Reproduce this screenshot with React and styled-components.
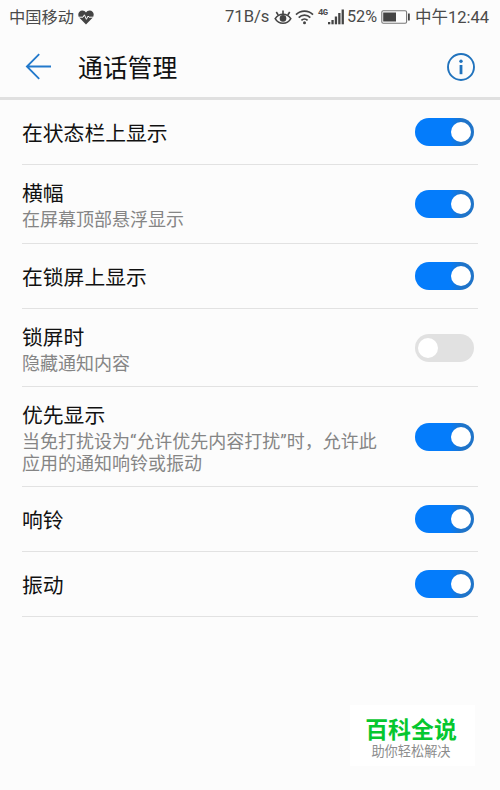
import React from 'react';
import styled, { createGlobalStyle } from 'styled-components';

const initialItems = [
    { id: "statusbar", title: "在状态栏上显示", on: true, height: 65 },
    { id: "banner", title: "横幅", desc: "在屏幕顶部悬浮显示", on: true, height: 79 },
    { id: "lockscreen", title: "在锁屏上显示", on: true, height: 65 },
    { id: "locked", title: "锁屏时", desc: "隐藏通知内容", on: false, height: 78 },
    { id: "priority", title: "优先显示", desc: "当免打扰设为“允许优先内容打扰”时，允许此应用的通知响铃或振动", on: true, height: 100 },
    { id: "ring", title: "响铃", on: true, height: 65 },
    { id: "vibrate", title: "振动", on: true, height: 65 },
]

const HeartIcon = () => (
    <svg width="16" height="15" viewBox="0 0 16 15">
        <path d="M8 14.6 1.4 7.8A4.2 4.2 0 0 1 .3 4.6C.3 2.2 2.1.4 4.3.4 6 .4 7.3 1.2 8 2.5 8.7 1.2 10 .4 11.7.4c2.2 0 4 1.8 4 4.2 0 1.3-.4 2.3-1.1 3.2z" fill="#444" />
        <path d="M1 7.2h4l1.4-2.4 2 4.5L10.100 6l.9 1.200h4" fill="none" stroke="#fcfcfc" strokeWidth="1" />
    </svg>
)

const EyeIcon = () => (
    <svg width="18" height="16" viewBox="0 0 18 16" fill="none" stroke="#444" strokeWidth="1.6">
        <path d="M1.2 9.6C3 6.8 5.8 5.2 9 5.2s6 1.6 7.8 4.4C15 12.7 12.2 14.3 9 14.3s-6-1.6-7.8-4.7z" />
        <path d="M9 5V1.5M4.2 6 2.3 3M13.8 6l1.9-3" />
        <circle cx="9" cy="9.4" r="3.3" fill="#444" stroke="none" />
    </svg>
)

const WifiIcon = () => (
    <svg width="19" height="16" viewBox="0 0 19 16" fill="none" stroke="#444" strokeWidth="1.7">
        <path d="M1 5.6a12 12 0 0 1 17 0M3.7 8.6a8.2 8.2 0 0 1 11.6 0M6.4 11.3a4.4 4.4 0 0 1 6.2 0" />
        <circle cx="9.5" cy="13.7" r="1.5" fill="#444" stroke="none" />
    </svg>
)

const SignalIcon = () => (
    <svg width="16" height="16" viewBox="0 0 16 16" fill="#444">
        <rect x="0" y="13" width="2.3" height="2.3" />
        <rect x="3.4" y="11" width="2.3" height="4.3" />
        <rect x="6.8" y="7.5" width="2.3" height="7.8" />
        <rect x="10.2" y="4" width="2.3" height="11.3" />
        <rect x="13.6" y="0.5" width="2.3" height="14.8" />
    </svg>
)

const BatteryIcon = () => (
    <svg width="30" height="14" viewBox="0 0 30 14">
        <rect x="0.8" y="0.8" width="24.8" height="12.4" rx="1.5" fill="none" stroke="#777" strokeWidth="1.1" />
        <rect x="2.2" y="2.5" width="12.8" height="9" fill="#444" />
        <rect x="27" y="3.5" width="1.8" height="7" fill="#444" />
    </svg>
)

const BackIcon = () => (
    <svg width="27" height="27" viewBox="0 0 27 27" fill="none" stroke="#2279cb" strokeWidth="1.8">
        <path d="M26 13.5H2M14.2 1.2 1.9 13.5l12.3 12.3" />
    </svg>
)

const InfoIcon = () => (
    <svg width="30" height="30" viewBox="0 0 30 30">
        <circle cx="15" cy="15" r="13" fill="none" stroke="#2173bd" strokeWidth="1.9" />
        <circle cx="15" cy="9.2" r="1.7" fill="#2173bd" />
        <rect x="13.6" y="13" width="2.8" height="9.2" fill="#2173bd" />
    </svg>
)

function App() {
    const [items, setItems] = React.useState(initialItems);

    const toggleItem = (id) => {
        setItems(items.map((item) => item.id === id ? { ...item, on: !item.on } : item))
    }

    return (
        <>
            <GlobalStyle />
            <Screen>
                <StatusBar>
                    <Carrier>中国移动</Carrier>
                    <HeartIcon />
                    <StatusRight>
                        <Speed>71B/s</Speed>
                        <EyeIcon />
                        <WifiIcon />
                        <Network>4G</Network>
                        <SignalIcon />
                        <Percent>52%</Percent>
                        <BatteryIcon />
                        <Clock>中午12:44</Clock>
                    </StatusRight>
                </StatusBar>
                <Header>
                    <IconButton aria-label="返回"><BackIcon /></IconButton>
                    <h1>通话管理</h1>
                    <IconButton aria-label="信息"><InfoIcon /></IconButton>
                </Header>
                <List>
                    {items.map((item) => (
                        <Row key={item.id} $height={item.height}>
                            <RowText $single={!item.desc}>
                                <RowTitle>{item.title}</RowTitle>
                                {item.desc && <RowDesc>{item.desc}</RowDesc>}
                            </RowText>
                            <Switch
                                role="switch"
                                aria-checked={item.on}
                                aria-label={item.title}
                                $on={item.on}
                                onClick={() => toggleItem(item.id)}
                            />
                        </Row>
                    ))}
                </List>
                <Badge>
                    <strong>百科全说</strong>
                    <span>助你轻松解决</span>
                </Badge>
            </Screen>
        </>
    );
}

const GlobalStyle = createGlobalStyle`
    * {
        box-sizing: border-box;
    }

    body {
        margin: 0;
        background-color: #fcfcfc;
        font-family: Roboto, "Noto Sans CJK SC", sans-serif;
    }
`

const Screen = styled.div`
    display: flex;
    flex-direction: column;
    width: 500px;
    height: 790px;
    overflow: hidden;
    background-color: #fcfcfc;
`

const StatusBar = styled.div`
    display: flex;
    align-items: center;
    height: 34px;
    padding: 0 11px 0 9px;
    font-size: 16.5px;
    line-height: 34px;
    color: #4a4a4a;
    white-space: nowrap;

    svg {
        flex-shrink: 0;
    }
`

const Carrier = styled.span`
    width: 69px;
    padding-top: 2px;
    font-size: 16.3px;
    line-height: 32px;
`

const StatusRight = styled.div`
    display: flex;
    align-items: center;
    margin-left: auto;
`

const Speed = styled.span`
    width: 49px;
    font-size: 16.6px;

    & + svg {
        margin-right: 3px;
    }
`

const Network = styled.span`
    width: 10px;
    margin: -8px 0 0 4px;
    font-family: "Liberation Mono", monospace;
    font-size: 9px;
    font-weight: 700;
    letter-spacing: -0.6px;
    line-height: 10px;
`

const Percent = styled.span`
    width: 34px;
    margin-left: 3px;
    font-size: 16.2px;
`

const Clock = styled.span`
    width: 74px;
    margin-left: 4px;
    padding-top: 2px;
    font-size: 16.5px;
    line-height: 32px;
`

const Header = styled.header`
    display: flex;
    align-items: center;
    height: 66px;
    padding: 2px 24px 0 25px;
    border-bottom: 3px solid #e0e0e0;

    h1 {
        flex: 1;
        margin: 0 0 0 26px;
        padding-top: 5px;
        font-size: 24.8px;
        font-weight: 400;
        line-height: 36px;
        color: #111;
    }
`

const IconButton = styled.button`
    display: flex;
    padding: 0;
    border: 0;
    background: none;
`

const List = styled.div`
    padding: 0 22px;
`

const Row = styled.div`
    display: flex;
    align-items: center;
    justify-content: space-between;
    height: ${(props) => props.$height}px;
    padding-right: 4px;
    border-bottom: 1px solid #e2e2e2;
`

const RowText = styled.div`
    width: 362px;
    padding-top: ${(props) => props.$single ? 3 : 2}px;
`

const RowTitle = styled.div`
    font-size: 20.8px;
    line-height: 30px;
    color: #111;
`

const RowDesc = styled.div`
    font-size: 18px;
    line-height: 22px;
    color: #858585;
`

const Switch = styled.button`
    display: flex;
    align-items: center;
    justify-content: ${(props) => props.$on ? "flex-end" : "flex-start"};
    width: 59px;
    height: 28px;
    padding: 0 3px;
    border: 0;
    border-radius: 14px;
    background: ${(props) => props.$on ? "linear-gradient(90deg, #047cfb 58%, #1f74c9 80%)" : "#e1e1e1"};

    &::after {
        content: "";
        width: 20px;
        height: 20px;
        border-radius: 50%;
        background-color: #fff;
    }
`

const Badge = styled.div`
    display: flex;
    flex-direction: column;
    align-items: center;
    align-self: flex-end;
    width: 125px;
    height: 61px;
    margin: auto 25px 24px 0;
    padding: 12px 3px 0 0;
    background-color: #fff;

    strong {
        font-size: 22.9px;
        font-weight: 700;
        line-height: 28px;
        color: #06c72f;
    }

    span {
        font-size: 13.2px;
        line-height: 14px;
        color: #8c8c8c;
    }
`

export default App;
